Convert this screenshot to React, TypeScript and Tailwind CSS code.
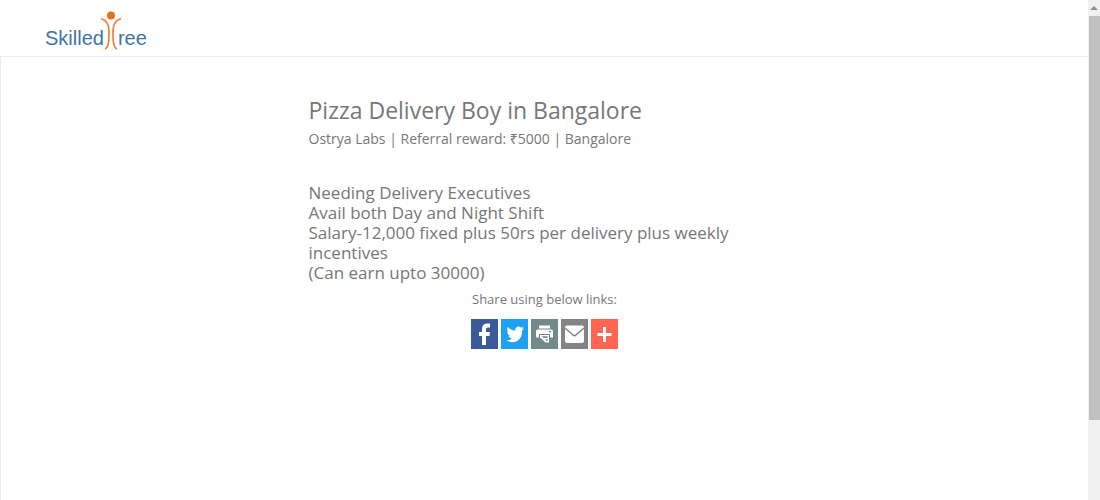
import type { ReactNode } from "react";

function Logo() {
  return (
    <a
      href="#"
      aria-label="SkilledTree home"
      className="flex items-end font-['Liberation_Sans',sans-serif] text-xl leading-6 text-[#3f74a6]"
    >
      <span>Skilled</span>
      <svg viewBox="0 0 20 40" className="-mx-[3px] h-10 w-5" fill="none" aria-hidden="true">
        <circle cx="10" cy="5.5" r="4" fill="#e8701a" />
        <path
          d="M0 8.500C5 10 8 13 8 21C8 30 8 37 4 39M20 8.500C15 10 12 13 12 21C12 30 12 37 16 39"
          stroke="#ee8440"
          strokeWidth="1.800"
        />
      </svg>
      <span>ree</span>
    </a>
  );
}

function ShareLink({ label, color, children }: { label: string; color: string; children: ReactNode }) {
  return (
    <a href="#" aria-label={label} className={`flex h-[30px] w-[27px] items-center justify-center ${color}`}>
      <svg viewBox="0 0 27 30" className="h-[30px] w-[27px]" fill="#fff" aria-hidden="true">
        {children}
      </svg>
    </a>
  );
}

function Scrollbar() {
  return (
    <div className="flex w-3 shrink-0 flex-col bg-[#f0f0f0]" aria-hidden="true">
      <div className="flex h-4 items-center justify-center">
        <svg viewBox="0 0 8 4" className="h-1 w-2">
          <path d="M4 0L8 4H0Z" fill="#909090" />
        </svg>
      </div>
      <div className="ml-px h-[404px] bg-[#c1c1c1]" />
    </div>
  );
}

export default function App() {
  return (
    <div className="flex min-h-screen bg-white font-['Open_Sans','Noto_Sans',sans-serif] text-[#777]">
      <div className="flex min-w-0 flex-1 flex-col">
        <header className="flex h-[57px] items-start border-b border-[#ededed] pt-[10px] pl-[45px]">
          <Logo />
        </header>
        <main className="flex-1 border-l border-[#ececec] px-4 pt-9">
          <div className="mx-auto max-w-[472px]">
            <h1 className="text-[23px] leading-[34px]">Pizza Delivery Boy in Bangalore</h1>
            <p className="text-[14px] leading-6">Ostrya Labs | Referral reward: ₹5000 | Bangalore</p>
            <div className="mt-8 pr-10 text-[17px] leading-5">
              <p>Needing Delivery Executives</p>
              <p>Avail both Day and Night Shift</p>
              <p>Salary-12,000 fixed plus 50rs per delivery plus weekly incentives</p>
              <p>(Can earn upto 30000)</p>
            </div>
            <p className="mt-1.5 text-center text-[13px] leading-5">Share using below links:</p>
            <div className="mt-2.5 flex justify-center gap-[3px]">
              <ShareLink label="Share on Facebook" color="bg-[#3b5998]">
                <path d="M11 26V17H8V13H11V10.500C11 6.500 13 4.500 16.500 4.500H19V8.500H17C15.500 8.500 15 9.200 15 10.500V13H19L18.400 17H15V26Z" />
              </ShareLink>
              <ShareLink label="Share on Twitter" color="bg-[#1da1f2]">
                <path d="M23 9.200c-.6.300-1.300.5-2 .6.700-.5 1.300-1.200 1.500-2.100-.7.400-1.400.8-2.300 1-2.200-2.600-6.600-1-6 3.100-3-.2-5.700-1.700-7.500-4.100-1.100 2-.4 4.200 1.100 5.400-.6 0-1.100-.2-1.600-.5 0 2 1.300 3.600 2.900 4.100-.5.200-1 .2-1.600.1.500 1.600 1.800 2.700 3.400 2.800-1.500 1.300-3.300 1.800-5.300 1.600 7.200 4.900 15.500.3 15.500-8.800v-.9c.8-.6 1.400-1.400 1.900-2.300Z" />
              </ShareLink>
              <ShareLink label="Print" color="bg-[#738a8d]">
                <path d="M8 6.500H19V9.500H8Z" />
                <path d="M7 10.500H20Q22 10.500 22 12.500V18.500H19V15H8V18.500H5V12.500Q5 10.500 7 10.500Z" />
                <path d="M9 16L18 16V23.500H14.500L9 18.500Z" />
                <path d="M10.800 17.200H16.500V19H12.500ZM14 20.200H16.500V22H15.500Z" fill="#738a8d" />
                <path d="M18 12H20V13.500H18Z" fill="#738a8d" />
              </ShareLink>
              <ShareLink label="Share by email" color="bg-[#848484]">
                <rect x="4" y="6.500" width="19" height="17.500" rx="2" />
                <path d="M4 9L12 16Q13.500 17.300 15 16L23 9" fill="none" stroke="#848484" strokeWidth="1.600" />
              </ShareLink>
              <ShareLink label="More sharing options" color="bg-[#ff6550]">
                <path d="M12 8H15V14H20.500V17H15V23H12V17H6.500V14H12Z" />
              </ShareLink>
            </div>
          </div>
        </main>
      </div>
      <Scrollbar />
    </div>
  );
}
